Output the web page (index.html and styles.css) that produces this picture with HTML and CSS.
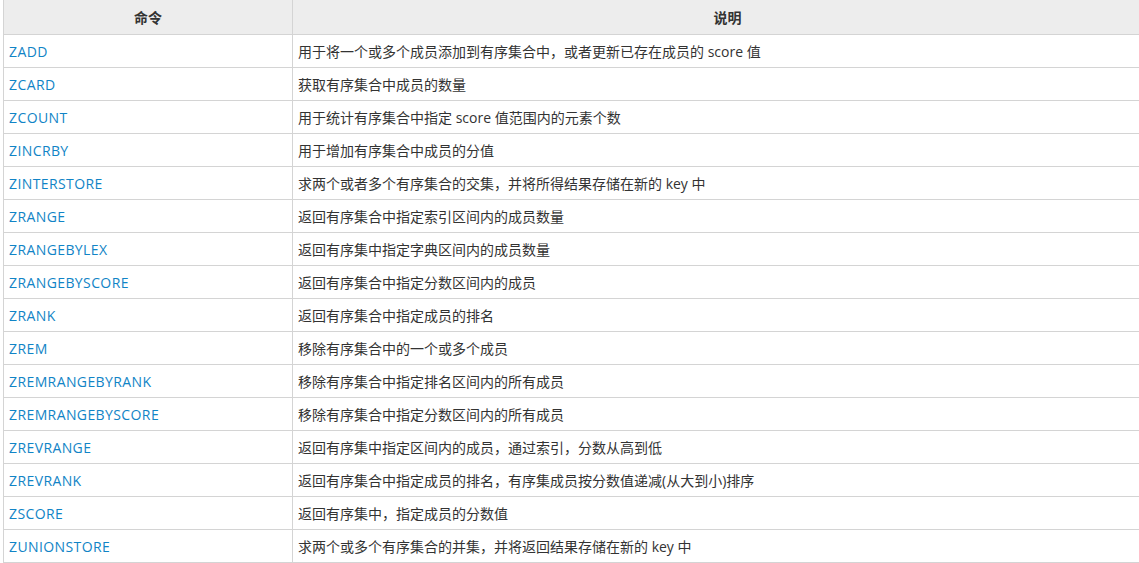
FILE: index.html
```html
<!DOCTYPE html>
<html lang="zh-CN">
<head>
<meta charset="utf-8">
<title>Redis 有序集合命令</title>
<link rel="stylesheet" href="styles.css">
</head>
<body>
<div class="wrap">
<table class="reference">
<thead>
<tr><th class="col-cmd">命令</th><th>说明</th></tr>
</thead>
<tbody>
<tr><td><a href="#">ZADD</a></td><td>用于将一个或多个成员添加到有序集合中，或者更新已存在成员的 score 值</td></tr>
<tr><td><a href="#">ZCARD</a></td><td>获取有序集合中成员的数量</td></tr>
<tr><td><a href="#">ZCOUNT</a></td><td>用于统计有序集合中指定 score 值范围内的元素个数</td></tr>
<tr><td><a href="#">ZINCRBY</a></td><td>用于增加有序集合中成员的分值</td></tr>
<tr><td><a href="#">ZINTERSTORE</a></td><td>求两个或者多个有序集合的交集，并将所得结果存储在新的 key 中</td></tr>
<tr><td><a href="#">ZRANGE</a></td><td>返回有序集合中指定索引区间内的成员数量</td></tr>
<tr><td><a href="#">ZRANGEBYLEX</a></td><td>返回有序集中指定字典区间内的成员数量</td></tr>
<tr><td><a href="#">ZRANGEBYSCORE</a></td><td>返回有序集合中指定分数区间内的成员</td></tr>
<tr><td><a href="#">ZRANK</a></td><td>返回有序集合中指定成员的排名</td></tr>
<tr><td><a href="#">ZREM</a></td><td>移除有序集合中的一个或多个成员</td></tr>
<tr><td><a href="#">ZREMRANGEBYRANK</a></td><td>移除有序集合中指定排名区间内的所有成员</td></tr>
<tr><td><a href="#">ZREMRANGEBYSCORE</a></td><td>移除有序集合中指定分数区间内的所有成员</td></tr>
<tr><td><a href="#">ZREVRANGE</a></td><td>返回有序集中指定区间内的成员，通过索引，分数从高到低</td></tr>
<tr><td><a href="#">ZREVRANK</a></td><td>返回有序集合中指定成员的排名，有序集成员按分数值递减(从大到小)排序</td></tr>
<tr><td><a href="#">ZSCORE</a></td><td>返回有序集中，指定成员的分数值</td></tr>
<tr><td><a href="#">ZUNIONSTORE</a></td><td>求两个或多个有序集合的并集，并将返回结果存储在新的 key 中</td></tr>
</tbody>
</table>
</div>
</body>
</html>
```
FILE: styles.css
```css
html, body {
  margin: 0;
  padding: 0;
  background: #fff;
  overflow: hidden;
}
.wrap {
  margin: -1px 0 0 3px;
  width: 1160px;
}
.reference {
  border-collapse: collapse;
  width: 100%;
  table-layout: fixed;
  font-family: "Open Sans", "Noto Sans CJK SC", sans-serif;
  font-size: 14px;
  color: #333;
}
.reference th,
.reference td {
  border: 1px solid #d4d4d4;
  padding: 0 5px;
  text-align: left;
  vertical-align: middle;
  white-space: nowrap;
}
.reference th {
  background: #ededed;
  height: 34px;
  text-align: center;
  font-weight: bold;
}
.reference td {
  height: 32px;
}
.reference .col-cmd {
  width: 278px;
}
.reference a {
  color: #1184c6;
  text-decoration: none;
  letter-spacing: 0.4px;
}
```
